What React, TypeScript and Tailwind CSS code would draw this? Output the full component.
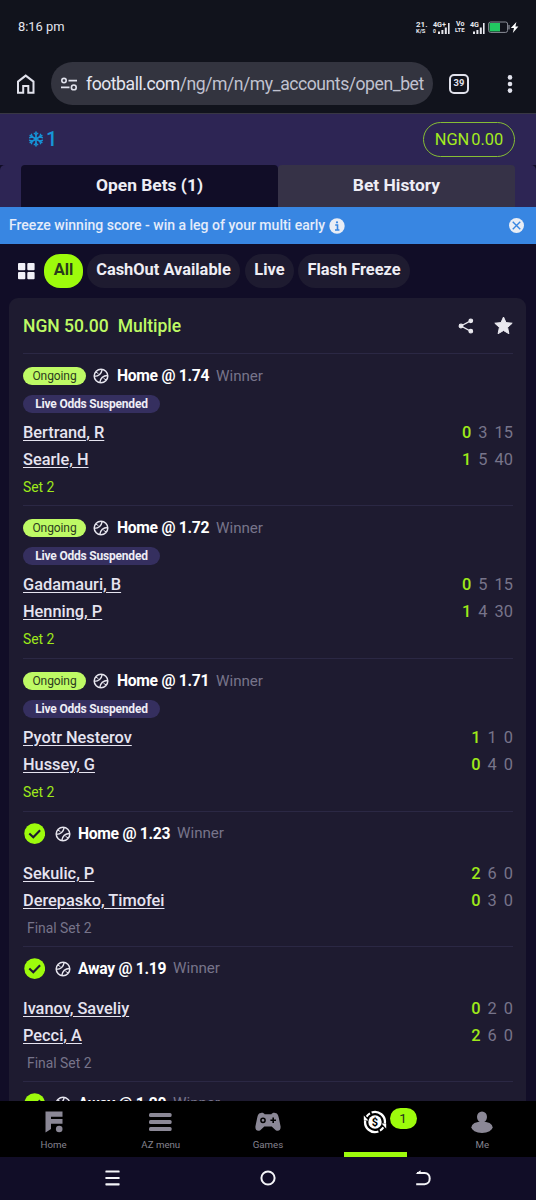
import React from "react";

type Leg = {
  status: "ongoing" | "won";
  pick: string;
  names: [string, string];
  scores: [string[], string[]];
  height: string;
};

const LEGS: Leg[] = [
  { status: "ongoing", pick: "Home @ 1.74", names: ["Bertrand, R", "Searle, H"], scores: [["0", "3", "15"], ["1", "5", "40"]], height: "h-[152px]" },
  { status: "ongoing", pick: "Home @ 1.72", names: ["Gadamauri, B", "Henning, P"], scores: [["0", "5", "15"], ["1", "4", "30"]], height: "h-[153px]" },
  { status: "ongoing", pick: "Home @ 1.71", names: ["Pyotr Nesterov", "Hussey, G"], scores: [["1", "1", "0"], ["0", "4", "0"]], height: "h-[153px]" },
  { status: "won", pick: "Home @ 1.23", names: ["Sekulic, P", "Derepasko, Timofei"], scores: [["2", "6", "0"], ["0", "3", "0"]], height: "h-[135px]" },
  { status: "won", pick: "Away @ 1.19", names: ["Ivanov, Saveliy", "Pecci, A"], scores: [["0", "2", "0"], ["2", "6", "0"]], height: "h-[135px]" },
  { status: "won", pick: "Away @ 1.20", names: ["", ""], scores: [[], []], height: "h-[135px]" },
];

function Signal() {
  return (
    <svg width="13" height="11" viewBox="0 0 13 11" fill="#e8e8ee">
      <rect x="0" y="8.5" width="2" height="2.5" />
      <rect x="3.4" y="7" width="2" height="4" />
      <rect x="6.8" y="4.5" width="2" height="6.5" />
      <rect x="10" y="0" width="1.6" height="11" />
    </svg>
  );
}

function StatusBar() {
  return (
    <div className="flex h-[54px] items-center pr-[17px] pl-[18px] text-[#e4e5ee]">
      <span className="text-[12.9px]">8:16 pm</span>
      <div className="ml-auto flex h-[13px] items-start text-[#e8e8ee]">
        <div className="flex w-[17px] flex-col text-[8px] leading-[7px] font-bold">
          <span>21.</span>
          <span className="text-[5.8px] leading-[6px]">K/S</span>
        </div>
        <div className="relative h-[13px] w-[22px]">
          <span className="absolute top-0 left-0 text-[7.2px] leading-[7px] font-bold">4G+</span>
          <span className="absolute top-[7px] left-0 text-[5px] leading-[6px] font-bold">0</span>
          <span className="absolute top-[2px] left-[5px]"><Signal /></span>
        </div>
        <div className="flex w-[15px] flex-col text-[7px] leading-[6.5px] font-bold">
          <span className="pl-px">Vo</span>
          <span className="text-[6px]">LTE</span>
        </div>
        <div className="relative h-[13px] w-[17px]">
          <span className="absolute top-0 left-0 text-[7.2px] leading-[7px] font-bold">4G</span>
          <span className="absolute top-[2px] left-[3px]"><Signal /></span>
        </div>
        <svg width="32" height="13" viewBox="0 0 32 13">
          <rect x="1.6" y="1" width="19" height="10.4" rx="2" fill="none" stroke="#8c8f99" strokeWidth="1" />
          <rect x="2.6" y="2" width="10.4" height="8.4" fill="#22c861" />
          <rect x="21.4" y="4" width="1.2" height="4.4" fill="#8c8f99" />
          <path d="M29.4 1 L23.8 7 H27 L25.8 12 L31.4 5.6 H28.4 Z" fill="#fff" />
        </svg>
      </div>
    </div>
  );
}

function BrowserBar() {
  return (
    <div className="flex h-[60px] items-center border-b border-[#383743] pl-[16px]">
      <svg className="shrink-0" width="20" height="22" viewBox="0 0 20 22" fill="none" stroke="#e1e2ec" strokeWidth="2">
        <path d="M2 8.6 L9.7 2.6 L17.5 8.6 V19.8 H12.3 V13 H7.2 V19.8 H2 Z" />
      </svg>
      <div className="ml-[15px] flex h-[43px] w-[382px] shrink-0 items-center rounded-full bg-[#33343f] pl-[9px]">
        <svg className="shrink-0" width="18" height="14" viewBox="0 0 18 14" fill="none" stroke="#e1e2ec" strokeWidth="1.6">
          <circle cx="4" cy="3.6" r="2.2" />
          <path d="M8.5 3.6 H17 M1 10.4 H9.5" />
          <circle cx="13.8" cy="10.4" r="2.4" />
        </svg>
        <span className="ml-[8px] pt-[2px] text-[17.6px] tracking-[-0.46px] whitespace-nowrap text-[#c0c2cf]">
          <span className="text-[#e4e5f0]">football.com</span>/ng/m/n/my_accounts/open_bet
        </span>
      </div>
      <div className="ml-[16px] flex size-[20px] shrink-0 items-center justify-center rounded-[5px] border-2 border-[#e1e2ec] text-[9.4px] font-bold text-[#e1e2ec]">39</div>
      <svg className="ml-[38px] shrink-0" width="6" height="20" viewBox="0 0 6 20" fill="#e1e2ec">
        <circle cx="3" cy="3.4" r="2.3" />
        <circle cx="3" cy="10" r="2.3" />
        <circle cx="3" cy="16.6" r="2.3" />
      </svg>
    </div>
  );
}

function Header() {
  return (
    <div className="bg-[#110d27]">
      <div className="flex h-[51px] items-center bg-[#2d2554] pr-[21px] pb-[1px] pl-[28px]">
        <svg width="16" height="16" viewBox="0 0 16 16" fill="none" stroke="#1695d8" strokeWidth="1.6">
          <path d="M8 .6 V15.4 M1.6 4.3 L14.4 11.7 M14.4 4.3 L1.6 11.7" />
          <path d="M5.8 1.8 L8 4 L10.2 1.8 M5.8 14.2 L8 12 L10.2 14.2 M1 6.8 L4.4 6 L3.3 2.8 M15 6.8 L11.6 6 L12.7 2.8 M1 9.2 L4.4 10 L3.3 13.2 M15 9.2 L11.6 10 L12.7 13.2" strokeWidth="1.2" />
        </svg>
        <span className="ml-[2px] text-[20px] leading-[24px] font-medium text-[#1695d8]">1</span>
        <div className="ml-auto flex h-[35px] w-[92px] items-center justify-center rounded-full border border-[#86bd35] text-[16.4px] leading-[19px] text-[#a4ec20]">
          <span className="mr-[2px]">NGN</span><span>0.00</span>
        </div>
      </div>
      <div className="flex h-[42px] rounded-t-[5px] bg-[#2d2554] px-[21px] text-[17.4px] font-bold text-[#eeedf5]">
        <div className="flex w-[257px] items-center justify-center rounded-t-[4px] bg-[#110d27] pb-[2px]">Open Bets (1)</div>
        <div className="flex w-[237px] items-center justify-center rounded-t-[4px] bg-[#363247] pb-[2px]">Bet History</div>
      </div>
      <div className="flex h-[37px] items-center bg-[#3886e2] pr-[12px] pl-[9px] text-[14.02px] font-medium text-[#e4ecfa]">
        <span className="whitespace-nowrap">Freeze winning score - win a leg of your multi early</span>
        <svg className="ml-[4px]" width="16" height="16" viewBox="0 0 16 16">
          <circle cx="8" cy="8" r="7.7" fill="#e9edf5" />
          <circle cx="8" cy="4.3" r="1.1" fill="#3886e2" />
          <path d="M6.2 7 H8.5 V12 M6 12 H10.4" stroke="#3886e2" strokeWidth="1.6" fill="none" />
        </svg>
        <svg className="ml-auto" width="15" height="15" viewBox="0 0 16 16">
          <circle cx="8" cy="8" r="8" fill="#e9edf5" />
          <path d="M4 4 L12 12 M12 4 L4 12" stroke="#3886e2" strokeWidth="1.5" />
        </svg>
      </div>
    </div>
  );
}

function Chips() {
  return (
    <div className="flex h-[54px] items-start pt-[10px] pl-[18px] text-[16.4px] font-bold text-[#eeedf4]">
      <svg className="mt-[9px]" width="17" height="17" viewBox="0 0 17 17" fill="#f1f0f7">
        <rect width="7.3" height="7.2" rx="1" />
        <rect x="9.3" width="7.3" height="7.2" rx="1" />
        <rect y="9.1" width="7.3" height="7.2" rx="1" />
        <rect x="9.3" y="9.1" width="7.3" height="7.2" rx="1" />
      </svg>
      <div className="ml-[9px] flex h-[34px] w-[39px] items-center justify-center rounded-[16px] bg-[#9dfb0c] pb-[1px] text-[#2a3a1c]">All</div>
      <div className="ml-[4px] flex h-[34px] w-[153px] items-center justify-center rounded-full bg-[#1e1b30] pb-[1px] whitespace-nowrap">CashOut Available</div>
      <div className="ml-[5px] flex h-[34px] w-[49px] items-center justify-center rounded-full bg-[#1e1b30] pb-[1px]">Live</div>
      <div className="ml-[4px] flex h-[34px] w-[112px] items-center justify-center rounded-full bg-[#1e1b30] pb-[1px]">Flash Freeze</div>
    </div>
  );
}

function TennisBall() {
  return (
    <svg width="16" height="16" viewBox="0 0 16 16" fill="none" stroke="#e6e5ee" strokeWidth="1.5">
      <circle cx="8" cy="8" r="6.8" />
      <path d="M1.3 8.4 C5.4 8.2 8.4 6 9.2 1.4 M6.8 14.6 C7.4 10.2 10.4 7.6 14.7 7.5" strokeWidth="1.4" />
      <path d="M3 4.2 L5.4 5.6 M13 11.8 L10.6 10.4" strokeWidth="1" />
    </svg>
  );
}

function Check() {
  return (
    <svg width="22" height="22" viewBox="0 0 22 22">
      <circle cx="11.7" cy="10.7" r="10.4" fill="#9dfb0c" />
      <path d="M6.3 10.5 L10.3 14.3 L17.1 7.3" fill="none" stroke="#1e1b30" strokeWidth="2.1" />
    </svg>
  );
}

function LegRow({ leg }: { leg: Leg }) {
  const ongoing = leg.status === "ongoing";
  return (
    <div className={"flex shrink-0 flex-col border-t border-[#2b2844] " + leg.height}>
      <div className={"flex shrink-0 items-center " + (ongoing ? "h-[44px]" : "h-[43px]")}>
        {ongoing ? (
          <div className="flex h-[18px] w-[63px] items-center justify-center rounded-full bg-[#befa65] text-[12px] tracking-[-0.1px] text-[#2c3a20]">Ongoing</div>
        ) : (
          <Check />
        )}
        <span className={ongoing ? "ml-[7px]" : "ml-[10px]"}><TennisBall /></span>
        <span className={(ongoing ? "ml-[8px]" : "ml-[7px]") + " text-[15.7px] tracking-[-0.3px] font-bold text-white"}>{leg.pick}</span>
        <span className="ml-[7px] text-[15.2px] tracking-[-0.05px] text-[#77748a]">Winner</span>
      </div>
      {ongoing ? (
        <div className="-mt-[3px] flex h-[18px] w-[137px] shrink-0 items-center justify-center rounded-full bg-[#352f5f] text-[12px] tracking-[-0.2px] font-bold text-[#eeedf5]">Live Odds Suspended</div>
      ) : null}
      <div className={ongoing ? "mt-[6px]" : "mt-[5px]"}>
        {leg.names.map((name, i) => (
          <div key={i} className="flex h-[27px] items-center justify-between">
            <span className="text-[16.35px] leading-[20px] font-medium text-[#e6e4f0] underline decoration-[1.3px] underline-offset-[2px]">{name}</span>
            <div className="flex gap-[7px] pt-[1px] text-[16.4px] leading-[20px] text-[#77748a]">
              {leg.scores[i].map((s, j) => (
                <span key={j} className={j === 0 ? "font-medium text-[#9ee91a]" : ""}>{s}</span>
              ))}
            </div>
          </div>
        ))}
      </div>
      {ongoing ? (
        <div className="mt-[4px] text-[13.9px] leading-[20px] text-[#9ee91a]">Set 2</div>
      ) : leg.names[0] ? (
        <div className="mt-[4px] pl-[4px] text-[13.9px] leading-[20px] text-[#77748a]">Final Set 2</div>
      ) : null}
    </div>
  );
}

function BetCard() {
  return (
    <div className="mr-[10px] ml-[9px] flex h-[803px] flex-col overflow-hidden rounded-t-[9px] bg-[#1e1b30] pr-[13px] pl-[14px]">
      <div className="flex h-[55px] shrink-0 items-center text-[17.5px] font-medium text-[#befa65]">
        <span className="pt-[2px]">NGN 50.00</span>
        <span className="ml-[9px] pt-[2px]">Multiple</span>
        <svg className="ml-auto" width="16" height="16" viewBox="0 0 16 16" fill="#e9e8ee" stroke="#e9e8ee" strokeWidth="1.2">
          <path d="M13 2.6 L3 8 L13 13.4" fill="none" />
          <circle cx="12.8" cy="2.8" r="1.8" />
          <circle cx="3" cy="8" r="1.8" />
          <circle cx="12.8" cy="13.2" r="1.8" />
        </svg>
        <svg className="ml-[20px]" width="19" height="19" viewBox="0 0 19 19" fill="#e9e8ee" stroke="#e9e8ee" strokeWidth="1" strokeLinejoin="round">
          <path d="M9.5 1 L12 6.6 L18.2 7.2 L13.6 11.4 L14.9 17.7 L9.5 14.5 L4.1 17.7 L5.4 11.4 L.8 7.2 L7 6.6 Z" />
        </svg>
      </div>
      {LEGS.map((leg, i) => (
        <LegRow key={i} leg={leg} />
      ))}
    </div>
  );
}

function BottomNav() {
  return (
    <div className="grid h-[56px] grid-cols-5 bg-black text-[9.7px] text-[#85838f]">
      <div className="flex flex-col items-center pt-[10px]">
        <svg width="18" height="22" viewBox="0 0 18 22" fill="#8b8896">
          <path d="M.5 .5 H17.5 V5.8 H6 V8 H17.5 V12.7 H6 V18 L.5 21.5 Z" />
          <circle cx="14.2" cy="18" r="3.3" />
        </svg>
        <span className="mt-[5px]">Home</span>
      </div>
      <div className="flex flex-col items-center pt-[10px]">
        <svg width="23" height="22" viewBox="0 0 23 22" fill="#8b8896">
          <rect y="2" width="22.6" height="4" rx="1.5" />
          <rect y="9" width="22.6" height="4" rx="1.5" />
          <rect y="16" width="22.6" height="4" rx="1.5" />
        </svg>
        <span className="mt-[5px]">AZ menu</span>
      </div>
      <div className="flex flex-col items-center pt-[10px]">
        <svg width="26" height="22" viewBox="0 0 26 22">
          <path d="M6 2 C3.8 2 2.8 4 2.2 6.8 L.4 15.5 C0 19 2.7 21 5.3 19.2 L9.3 15.5 H16.7 L20.7 19.2 C23.3 21 26 19 25.6 15.5 L23.8 6.8 C23.2 4 22.2 2 20 2 C18.6 1.5 17.2 2 16.4 3.3 H9.6 C8.8 2 7.4 1.5 6 2 Z" fill="#8b8896" />
          <circle cx="8" cy="9.3" r="2.1" fill="none" stroke="#000" strokeWidth="1.5" />
          <path d="M15.4 9.3 H21 M18.2 6.5 V12.1" stroke="#000" strokeWidth="1.6" />
        </svg>
        <span className="mt-[5px]">Games</span>
      </div>
      <div className="relative flex flex-col items-center pt-[9px]">
        <svg width="24" height="24" viewBox="0 0 24 24">
          <circle cx="12" cy="12" r="6.7" fill="#fff" />
          <text x="12" y="15.9" textAnchor="middle" fontFamily="Roboto, sans-serif" fontWeight="700" fontSize="11" fill="#000">$</text>
          <path d="M8.6 2.5 A10 10 0 0 1 21.8 13.5 M15.4 21.5 A10 10 0 0 1 2.2 10.5" fill="none" stroke="#fff" strokeWidth="2.3" />
          <path d="M3.6 6.6 A10 10 0 0 1 7 3.4 M20.4 17.4 A10 10 0 0 1 17 20.6" fill="none" stroke="#fff" strokeWidth="2" />
          <path d="M.8 5.4 V10.6 H5.4 Z M23.2 18.6 V13.4 H18.6 Z" fill="#fff" />
        </svg>
        <div className="absolute top-[7px] left-[68px] flex h-[21px] w-[27px] items-center justify-center rounded-full bg-[#9dfb0c] text-[13.5px] text-[#26331c]">1</div>
        <div className="mt-auto h-[5px] w-[63px] bg-[#9dfb0c]" />
      </div>
      <div className="flex flex-col items-center pt-[10px]">
        <svg width="22" height="22" viewBox="0 0 22 22" fill="#8b8896">
          <ellipse cx="11" cy="6" rx="5" ry="5.6" />
          <ellipse cx="11" cy="16.2" rx="10.6" ry="5.8" />
        </svg>
        <span className="mt-[5px]">Me</span>
      </div>
    </div>
  );
}

function SystemBar() {
  return (
    <div className="flex h-[43px] items-center bg-[#110d27] pb-[1px] pl-[105px]">
      <svg width="15" height="16" viewBox="0 0 15 16" fill="#f4f4f8">
        <rect x=".4" y=".4" width="14.2" height="2.2" rx=".6" />
        <rect x=".4" y="6.9" width="14.2" height="2.2" rx=".6" />
        <rect x=".4" y="13.2" width="14.2" height="2.2" rx=".6" />
      </svg>
      <svg className="ml-[140px]" width="16" height="16" viewBox="0 0 16 16" fill="none" stroke="#f4f4f8" strokeWidth="2">
        <circle cx="8" cy="8" r="6.6" />
      </svg>
      <svg className="ml-[139px]" width="16" height="16" viewBox="0 0 16 16" fill="none" stroke="#f4f4f8" strokeWidth="2">
        <path d="M2 3 H9.6 C16.4 3 16.4 14.2 9.6 14.2 H1.2" />
        <path d="M.6 3.8 L5.6 .3 V4 Z" fill="#f4f4f8" stroke="none" />
      </svg>
    </div>
  );
}

export default function App() {
  return (
    <div className="flex h-[1200px] w-[536px] flex-col overflow-hidden bg-[#110d27] font-[Roboto,sans-serif]">
      <div className="bg-[#11131c]">
        <StatusBar />
        <BrowserBar />
      </div>
      <Header />
      <Chips />
      <BetCard />
      <BottomNav />
      <SystemBar />
    </div>
  );
}
